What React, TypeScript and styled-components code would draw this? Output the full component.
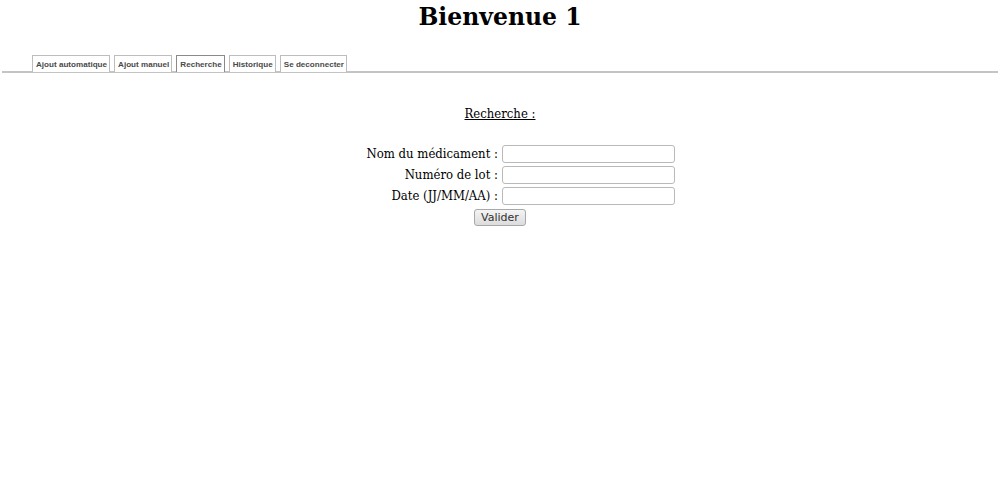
import styled, { createGlobalStyle } from 'styled-components'

const GlobalStyle = createGlobalStyle`
  body {
    margin: 0;
    background: #fff;
    font-family: 'DejaVu Serif Condensed', 'DejaVu Serif', serif;
    font-stretch: condensed;
    color: #000;
  }
`

const Title = styled.h1`
  margin: 0;
  padding-top: 2px;
  text-align: center;
  font-family: 'DejaVu Serif', serif;
  font-stretch: normal;
  font-size: 23.5px;
  font-weight: bold;
  line-height: 30px;
`

const Tabs = styled.ul`
  display: flex;
  gap: 4px;
  list-style: none;
  margin: 23px 2px 0 2px;
  padding: 0 0 0 30px;
  border-bottom: 2px solid #c4c4c4;
`

const Tab = styled.li<{ active?: boolean }>`
  display: flex;
  align-items: center;
  height: 16px;
  padding: 0 2px 0 3px;
  margin-bottom: -1px;
  background: #fff;
  border: 1px solid ${({ active }) => (active ? '#8a8a8a' : '#bdbdbd')};
  border-bottom: none;
  font-family: 'Liberation Sans', Arial, sans-serif;
  font-size: 8.1px;
  font-weight: bold;
  color: #4a4a4a;
  cursor: pointer;
`

const Content = styled.div`
  display: flex;
  flex-direction: column;
  align-items: center;
  padding-top: 33px;
`

const Heading = styled.div`
  font-size: 13px;
  text-decoration: underline;
  margin-bottom: 24px;
`

const Form = styled.form`
  display: grid;
  grid-template-columns: 1fr 1fr;
  column-gap: 4px;
  row-gap: 3px;
  width: 100%;
  align-items: center;
`

const Label = styled.label`
  text-align: right;
  font-size: 13px;
  line-height: 18px;
`

const Input = styled.input`
  justify-self: start;
  box-sizing: border-box;
  width: 173px;
  height: 18px;
  border: 1px solid #b9b9b9;
  border-radius: 3px;
  padding: 0 3px;
  font-size: 12px;
`

const Submit = styled.button`
  grid-column: 1 / span 2;
  justify-self: center;
  margin-top: 1px;
  width: 52px;
  height: 17px;
  padding: 0;
  border: 1px solid #a8a8a8;
  border-radius: 3px;
  background: linear-gradient(#f4f4f4, #dcdcdc);
  font-family: 'DejaVu Sans', sans-serif;
  font-stretch: normal;
  font-size: 11px;
  color: #333;
`

const tabs = ['Ajout automatique', 'Ajout manuel', 'Recherche', 'Historique', 'Se deconnecter']

const fields = ['Nom du médicament :', 'Numéro de lot :', 'Date (JJ/MM/AA) :']

const App = () => {
  return (
    <>
      <GlobalStyle />
      <Title>Bienvenue 1</Title>
      <Tabs>
        {tabs.map((t) => (
          <Tab key={t} active={t === 'Recherche'}>
            {t}
          </Tab>
        ))}
      </Tabs>
      <Content>
        <Heading>Recherche :</Heading>
        <Form onSubmit={(e) => e.preventDefault()}>
          {fields.map((f) => [
            <Label key={f}>{f}</Label>,
            <Input key={f + '-input'} type='text' />,
          ])}
          <Submit type='submit'>Valider</Submit>
        </Form>
      </Content>
    </>
  )
}

export default App
